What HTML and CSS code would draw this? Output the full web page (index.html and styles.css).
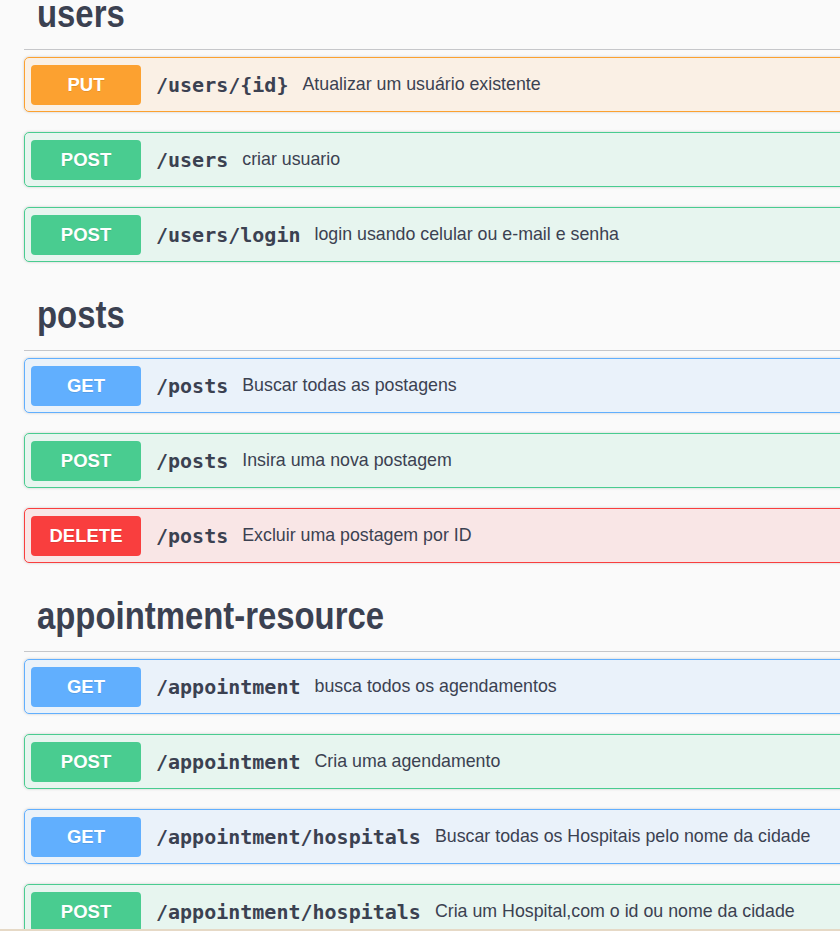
FILE: index.html
```html
<!DOCTYPE html>
<html lang="pt">
<head>
<meta charset="utf-8">
<title>Swagger UI</title>
<link rel="stylesheet" href="styles.css">
</head>
<body>
<div class="page">
  <section class="tag">
    <h3 class="tag-title"><span class="tag-name">users</span></h3>
    <div class="opblock put">
      <span class="method">PUT</span>
      <span class="path">/users/{id}</span>
      <span class="desc">Atualizar um usuário existente</span>
    </div>
    <div class="opblock post">
      <span class="method">POST</span>
      <span class="path">/users</span>
      <span class="desc">criar usuario</span>
    </div>
    <div class="opblock post">
      <span class="method">POST</span>
      <span class="path">/users/login</span>
      <span class="desc">login usando celular ou e-mail e senha</span>
    </div>
  </section>
  <section class="tag">
    <h3 class="tag-title"><span class="tag-name">posts</span></h3>
    <div class="opblock get">
      <span class="method">GET</span>
      <span class="path">/posts</span>
      <span class="desc">Buscar todas as postagens</span>
    </div>
    <div class="opblock post">
      <span class="method">POST</span>
      <span class="path">/posts</span>
      <span class="desc">Insira uma nova postagem</span>
    </div>
    <div class="opblock delete">
      <span class="method">DELETE</span>
      <span class="path">/posts</span>
      <span class="desc">Excluir uma postagem por ID</span>
    </div>
  </section>
  <section class="tag">
    <h3 class="tag-title"><span class="tag-name">appointment-resource</span></h3>
    <div class="opblock get">
      <span class="method">GET</span>
      <span class="path">/appointment</span>
      <span class="desc">busca todos os agendamentos</span>
    </div>
    <div class="opblock post">
      <span class="method">POST</span>
      <span class="path">/appointment</span>
      <span class="desc">Cria uma agendamento</span>
    </div>
    <div class="opblock get">
      <span class="method">GET</span>
      <span class="path">/appointment/hospitals</span>
      <span class="desc">Buscar todas os Hospitais pelo nome da cidade</span>
    </div>
    <div class="opblock post">
      <span class="method">POST</span>
      <span class="path">/appointment/hospitals</span>
      <span class="desc">Cria um Hospital,com o id ou nome da cidade</span>
    </div>
  </section>
</div>
<div class="bottom-edge"></div>
</body>
</html>
```
FILE: styles.css
```css
html, body {
  margin: 0;
  padding: 0;
  background: #fafafa;
  overflow: hidden;
  height: 931px;
}

body {
  font-family: "Liberation Sans", Arial, sans-serif;
  color: #3b4151;
}

.page {
  margin: -19px 0 0 24px;
  width: 900px;
}

.tag-title {
  margin: 0 0 7px 0;
  padding: 10px 20px 12px 13px;
  font-family: "Liberation Sans", Arial, sans-serif;
  font-size: 38px;
  line-height: 46px;
  font-weight: 700;
  color: #3b4151;
  border-bottom: 1px solid #c6c7ca;
}

.tag-name {
  display: inline-block;
  transform: scaleX(0.865);
  transform-origin: left center;
}

.opblock {
  box-sizing: border-box;
  height: 55px;
  margin: 0 0 20px 0;
  padding: 0 6px;
  display: flex;
  align-items: center;
  border: 1px solid;
  border-radius: 5px;
  box-shadow: 0 0 3px rgba(0, 0, 0, 0.19);
}

.method {
  box-sizing: border-box;
  width: 110px;
  height: 40px;
  flex: none;
  display: flex;
  align-items: center;
  justify-content: center;
  border-radius: 4px;
  color: #fff;
  font-family: "Liberation Sans", Arial, sans-serif;
  font-weight: 700;
  font-size: 18.5px;
  text-shadow: 0 1px 0 rgba(0, 0, 0, 0.1);
}

.path {
  padding: 0 14px 0 15px;
  font-family: "DejaVu Sans Mono", monospace;
  font-weight: 700;
  font-size: 20px;
  color: #3b4151;
  white-space: nowrap;
}

.desc {
  font-family: "Liberation Sans", Arial, sans-serif;
  font-size: 17.8px;
  color: #3b4151;
  white-space: nowrap;
}

.put { background: rgba(252, 161, 48, 0.1); border-color: #fca130; }
.put .method { background: #fca130; }
.post { background: rgba(73, 204, 144, 0.1); border-color: #49cc90; }
.post .method { background: #49cc90; }
.get { background: rgba(97, 175, 254, 0.1); border-color: #61affe; }
.get .method { background: #61affe; }
.delete { background: rgba(249, 62, 62, 0.1); border-color: #f93e3e; }
.delete .method { background: #f93e3e; }

.bottom-edge {
  position: fixed;
  left: 0;
  right: 0;
  bottom: 0;
  height: 2px;
  background: #e6d9c6;
}
```
